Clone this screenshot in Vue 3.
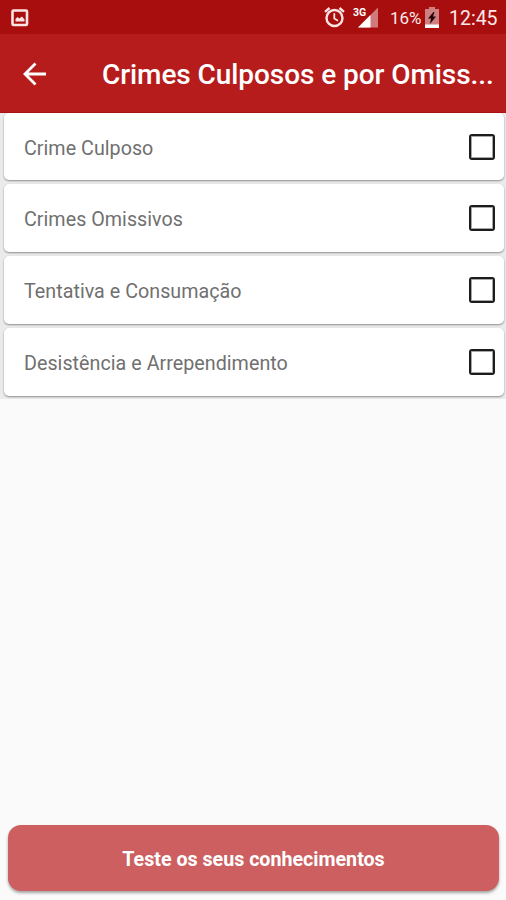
<template>
  <div class="app-container">
    <div class="status-bar">
      <svg class="picture-icon" width="18" height="18" viewBox="0 0 18 18">
        <rect x="1.5" y="1.5" width="14.5" height="14.5" rx="1" fill="none" stroke="#fbe3e3" stroke-width="2.6" />
        <path d="M4.5 12.5V10l2-2 1.8 1.5L11 7.5l2.5 3v2z" fill="#fbe3e3" />
      </svg>
      <div class="status-right">
        <svg class="alarm-icon" width="22" height="22" viewBox="0 0 22 22" fill="none" stroke="#fbe3e3">
          <circle cx="10.5" cy="12" r="8" stroke-width="2.4" />
          <path d="M1 5.8L5.5 2M20 5.8L15.5 2" stroke-width="2.4" />
          <path d="M10.3 7.2v5.2l3.7 2.3" stroke-width="1.8" />
        </svg>
        <svg class="signal-icon" width="28" height="24" viewBox="0 0 28 24">
          <path d="M25 2.5v20H5z" fill="#d07a7a" />
          <path d="M17.5 10V22.5H5z" fill="#fff" />
          <path d="M0 2h15v10H0z" fill="#a80e0e" />
          <text x="0" y="11.3" class="network">3G</text>
        </svg>
        <span class="percent">16%</span>
        <svg class="battery-icon" width="14" height="21" viewBox="0 0 14 21">
          <path d="M4 0h6v2h4v19H0V2h4z" fill="#cf8181" />
          <path d="M0 17.5h14V21H0z" fill="#fff" />
          <path d="M8.5 5L3 11.5h3L5 17l6-7.5H8L9.5 5z" fill="#240505" />
        </svg>
        <span class="clock">12:45</span>
      </div>
    </div>
    <header class="toolbar">
      <button class="back" aria-label="Voltar">
        <svg width="24" height="24" viewBox="0 0 24 24" fill="none" stroke="#fff" stroke-width="2.8">
          <path d="M23 12H2.5M12.5 1.5L2 12l10.5 10.5" />
        </svg>
      </button>
      <h1>Crimes Culposos e por Omiss...</h1>
    </header>
    <main class="list">
      <div v-for="topic in topics" :key="topic.title" class="card" @click="topic.done = !topic.done">
        <span class="card-title">{{ topic.title }}</span>
        <span class="checkbox" :class="{ checked: topic.done }"></span>
      </div>
    </main>
    <footer class="bottom">
      <button class="quiz-button">Teste os seus conhecimentos</button>
    </footer>
  </div>
</template>

<script setup>
import { ref } from 'vue';

const topics = ref([
  { title: 'Crime Culposo', done: false },
  { title: 'Crimes Omissivos', done: false },
  { title: 'Tentativa e Consumação', done: false },
  { title: 'Desistência e Arrependimento', done: false },
]);
</script>

<style>
html, body {
  height: 100%;
  margin: 0;
  overflow: hidden;
}
</style>

<style scoped>
.app-container {
  display: flex;
  flex-direction: column;
  height: 100vh;
  background-color: #fafafa;
  font-family: Roboto, "Liberation Sans", sans-serif;
}

.status-bar {
  display: flex;
  flex: none;
  justify-content: space-between;
  height: 34px;
  box-sizing: border-box;
  padding: 0 9px 0 11px;
  background-color: #a80e0e;
  color: #fbe9e9;
}

.picture-icon {
  margin-top: 9px;
}

.status-right {
  display: flex;
  align-items: flex-start;
}

.alarm-icon {
  margin-top: 6px;
}

.signal-icon {
  margin: 5px 0 0 7px;
}

.network {
  font-size: 10.5px;
  font-weight: 700;
  fill: #fff;
}

.percent {
  margin: 7px 0 0 9px;
  font-size: 17px;
  line-height: 22px;
  width: 31px;
  white-space: nowrap;
}

.battery-icon {
  margin: 7px 0 0 4px;
}

.clock {
  margin: 7px 0 0 10px;
  font-size: 19.5px;
  line-height: 24px;
  width: 48px;
  white-space: nowrap;
}

.toolbar {
  display: flex;
  flex: none;
  align-items: center;
  height: 79px;
  box-sizing: border-box;
  border-bottom: 1px solid #ac1414;
  background-color: #b71c1c;
  color: #fff;
}

.back {
  display: flex;
  margin: 1px 0 0 23px;
  padding: 0;
  border: 0;
  background: none;
}

h1 {
  margin: 4px 0 0 55px;
  font-size: 28px;
  font-weight: 500;
  line-height: 36px;
  letter-spacing: -0.07px;
  white-space: nowrap;
}

.list {
  display: flex;
  flex-direction: column;
  flex: none;
  gap: 4px;
  padding: 0 2px 3px 4px;
  background-color: #ebebeb;
}

.card {
  display: flex;
  align-items: center;
  justify-content: space-between;
  height: 68px;
  box-sizing: border-box;
  padding: 0 9px 0 20px;
  border-radius: 5px;
  background-color: #fff;
  box-shadow: 0 1px 2px rgba(0, 0, 0, 0.4);
}

.card:first-child {
  height: 67px;
}

.card-title {
  margin-top: 2px;
  color: #707070;
  font-size: 19.7px;
  letter-spacing: 0.03px;
}

.card:first-child .card-title {
  margin-top: 3px;
}

.checkbox {
  width: 26px;
  height: 26px;
  box-sizing: border-box;
  border: 2px solid #1c1c1c;
  border-radius: 3px;
  box-shadow: inset 0 0 0 1px rgba(0, 0, 0, 0.35);
}

.checkbox.checked {
  background-color: #b71c1c;
}

.bottom {
  margin-top: auto;
  padding: 0 7px 9px 8px;
}

.quiz-button {
  display: block;
  width: 100%;
  height: 66px;
  padding: 3px 0 0;
  border: 0;
  border-radius: 13px;
  background-color: #cd5f60;
  box-shadow: 0 2px 3px rgba(0, 0, 0, 0.35);
  color: #fff;
  font-family: inherit;
  font-size: 19.65px;
  font-weight: 700;
}
</style>
